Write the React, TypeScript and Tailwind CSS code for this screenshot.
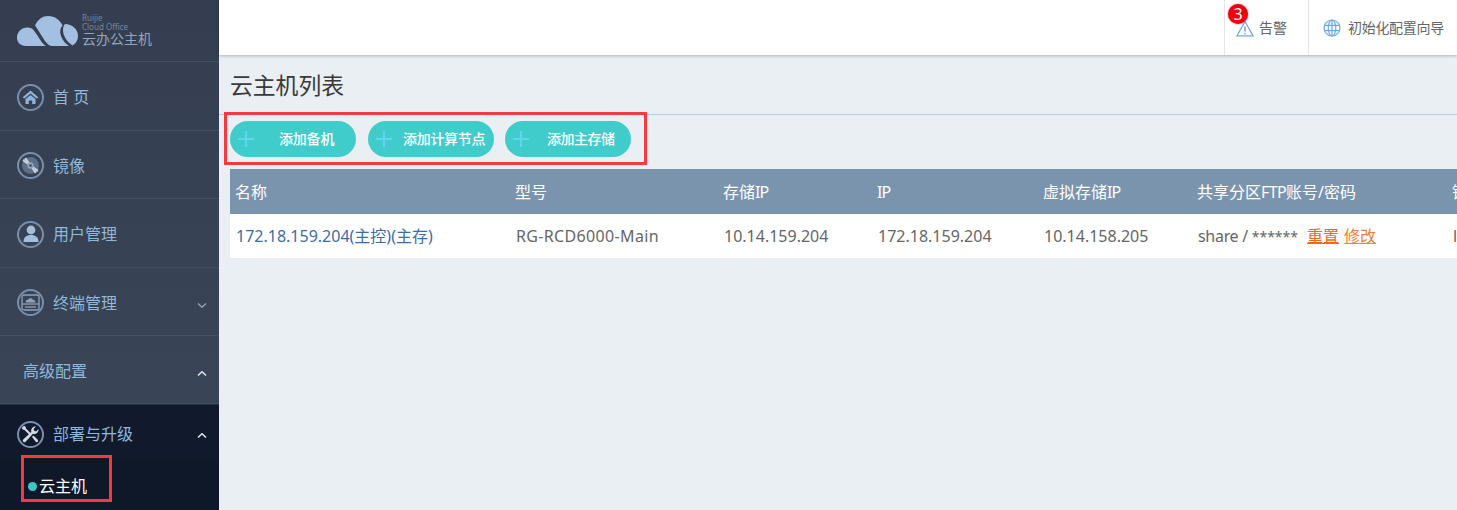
import React from "react";

function Ring({ children }: { children: React.ReactNode }) {
  return (
    <span className="flex h-[27px] w-[27px] shrink-0 items-center justify-center rounded-full border-2 border-[#7a8fa9]">
      {children}
    </span>
  );
}

const Chevron = ({ up, bright }: { up?: boolean; bright?: boolean }) => (
  <svg width="10" height="6" viewBox="0 0 10 6" className="absolute right-[12px] top-1/2 translate-y-[0.5px]" fill="none" stroke={bright ? "#e4e9ef" : "#8da0b8"} strokeWidth="1.5">
    <path d={up ? "M1 5 L5 1.2 L9 5" : "M1 1 L5 4.8 L9 1"} />
  </svg>
);

function NavItem({ icon, label, chevron, h }: { icon?: React.ReactNode; label: string; chevron?: "up" | "down"; h: string }) {
  return (
    <div className={`relative flex items-center border-b border-[#434e61] pl-[17px] pt-[2px] ${h}`}>
      {icon ? <Ring>{icon}</Ring> : null}
      <span className={`text-[16px] leading-none text-[#8fb8da] ${icon ? "ml-[9px]" : "ml-[6px]"}`}>{label}</span>
      {chevron ? <Chevron up={chevron === "up"} bright={chevron === "up"} /> : null}
    </div>
  );
}

const HomeIcon = (
  <svg width="17" height="15" viewBox="0 0 17 15" fill="#8fb3d6">
    <path d="M8.5 0.5 L16.5 7.5 L14.5 8.5 L8.5 3.5 L2.5 8.5 L0.5 7.5 Z" />
    <path d="M8.5 5 L13.5 9 V14 H10.2 V10.5 H6.8 V14 H3.5 V9 Z" />
  </svg>
);
const DiscIcon = (
  <svg width="21" height="21" viewBox="0 0 21 21">
    <circle cx="10.5" cy="10.5" r="8.5" fill="#5f6f85" />
    <path d="M3.5 4 L8.5 8.5 L7.5 9.5 L2.5 6 Z M6 2.5 L9.5 7.5 L8.5 8.5 L4 4 Z M17.5 17 L12.5 12.5 L13.5 11.5 L18.5 15 Z M15 18.5 L11.5 13.5 L12.5 12.5 L17 17 Z" fill="#c6d2df" />
    <circle cx="10.5" cy="10.5" r="3.2" fill="#8fa3ba" />
    <circle cx="10.5" cy="10.5" r="1.2" fill="#3a4558" />
  </svg>
);
const UserIcon = (
  <svg width="16" height="18" viewBox="0 0 16 18" fill="#a3bfdc">
    <circle cx="8" cy="5" r="4.4" />
    <path d="M0.5 17 C0.5 12 3.5 10 8 10 C12.5 10 15.5 12 15.5 17 Z" />
  </svg>
);
const TerminalIcon = (
  <svg width="19" height="17" viewBox="0 0 19 17" fill="none" stroke="#8fa3ba" strokeWidth="1.3">
    <rect x="1" y="1" width="17" height="15" rx="2" />
    <path d="M1 10 H18" />
    <path d="M5 8.5 C4 6.5 6 5.5 7 6 C8 3.5 11.5 4 12 6 C13.5 5.5 15 7.5 14 8.5 Z" fill="#8fa3ba" stroke="none" />
    <path d="M4 13 H15" />
  </svg>
);
const ToolIcon = (
  <svg width="19" height="19" viewBox="0 0 19 19" fill="#cfdbe8">
    <path d="M2 3.5 L3.5 2 L9.8 8.3 L8.3 9.8 Z" />
    <path d="M1.5 1.5 L4 1 L5 3 L3 5 L1 4 Z" />
    <path d="M17.5 4 A4.2 4.2 0 0 1 12 8.7 L4.6 16.8 A1.7 1.7 0 0 1 2.2 14.4 L10.3 7 A4.2 4.2 0 0 1 15 1.5 L12.6 3.9 L13.2 5.8 L15.1 6.4 Z" />
    <path d="M11 12 L12.5 10.5 L17 15 A1.5 1.5 0 0 1 15 17 Z" />
  </svg>
);
const Plus = () => (
  <svg width="16" height="16" viewBox="0 0 16 16" stroke="#62d3f0" strokeWidth="2" shapeRendering="crispEdges" className="shrink-0">
    <path d="M8 0 V16 M0 8 H16" />
  </svg>
);

function AddButton({ label, textClass, className }: { label: string; textClass: string; className?: string }) {
  return (
    <button className={`flex h-[36px] w-[126px] items-center rounded-full bg-[#41cccc] pl-[8px] ${className ?? ""}`}>
      <Plus />
      <span className={`text-[14px] font-medium leading-none text-white ${textClass}`}>{label}</span>
    </button>
  );
}

const Ip = () => <span className="tracking-[-1px]">IP</span>;

const headers: React.ReactNode[] = [
  "名称",
  "型号",
  <>存储<Ip /></>,
  <Ip />,
  <>虚拟存储<Ip /></>,
  <>共享分区<span className="tracking-[-0.6px]">FTP</span>账号/密码</>,
  "镜像版本",
];

export default function App() {
  return (
    <div className="flex h-[510px] w-[1457px] overflow-hidden bg-[#e9eff3] font-['Noto_Sans','Noto_Sans_CJK_SC',sans-serif]">
      <aside className="flex w-[219px] shrink-0 flex-col bg-gradient-to-b from-[#343e50] to-[#3b4659]">
        <div className="flex h-[62px] items-start border-b border-[#434e61] pl-[17px] pt-[16px]">
          <svg width="62" height="30" viewBox="0 0 62 30">
            <path fill="#a3c0e0" d="M9 30 C3 30 0 26 0 21.5 C0 16 5 11 11 11.5 C13.5 11.5 15 12.5 16 13.5 C21 19 24 27 29 30 Z" />
            <path fill="#a3c0e0" d="M18 9.5 C21 3 26 0 31 0 C38 0 43 4 45.5 9.5 C43 12 42.5 16 44 20 C46 25 49 28 52 30 H34 C28 28 25 19 18 9.5 Z" />
            <path fill="#a3c0e0" d="M48 8 C55 8 61 13 61 20 C61 25 58 28 55.5 29.5 C50 26 46 20 46 14 C46 11 47 9 48 8 Z" />
          </svg>
          <div className="ml-[3px] mt-[-2px] flex flex-col text-[#74849a]">
            <span className="text-[8px] leading-[8px]">Ruijie</span>
            <span className="mt-[1px] text-[8px] leading-[8px]">Cloud Office</span>
            <span className="mt-[1px] text-[14px] leading-[14px] text-[#94a6bd]">云办公主机</span>
          </div>
        </div>
        <NavItem h="h-[69px]" icon={HomeIcon} label="首 页" />
        <NavItem h="h-[68px]" icon={DiscIcon} label="镜像" />
        <NavItem h="h-[69px]" icon={UserIcon} label="用户管理" />
        <NavItem h="h-[68px]" icon={TerminalIcon} label="终端管理" chevron="down" />
        <NavItem h="h-[68px]" label="高级配置" chevron="up" />
        <div className="flex min-h-0 flex-1 flex-col border-t border-[#262f3f] bg-[#0e1829]">
          <div className="relative flex h-[54px] shrink-0 items-center bg-[#101a2c] pl-[17px] pt-[4px]">
            <Ring>{ToolIcon}</Ring>
            <span className="ml-[9px] text-[16px] leading-none text-[#8fb8da]">部署与升级</span>
            <Chevron up bright />
          </div>
          <div className="relative ml-[21px] mt-[-4px] flex h-[47px] w-[91px] items-center border-[3px] border-[#f33a3f] pl-[4px] pt-[15px]">
            <span className="h-[9px] w-[9px] rounded-full bg-[#3fc6c8]" />
            <span className="ml-[2px] text-[16px] leading-none text-white">云主机</span>
          </div>
        </div>
      </aside>

      <main className="flex min-w-0 flex-1 flex-col">
        <header className="flex h-[55px] shrink-0 justify-end bg-white shadow-[0_1px_3px_rgba(0,0,0,0.25)]">
          <div className="relative flex w-[85px] items-center border-x border-[#e4e6e8] pl-[11px]">
            <span className="absolute left-[3px] top-[4px] flex h-[20px] w-[20px] items-center justify-center rounded-full bg-[#f2000d] text-[16px] leading-none text-white shadow-[0_0_2px_rgba(120,0,0,0.6)]">3</span>
            <svg width="18" height="17" viewBox="0 0 18 17" fill="none" stroke="#6aaae6" strokeWidth="1.3" className="mt-[1px]">
              <path d="M9 1.5 L17 15.8 H1 Z" />
              <path d="M9 6.5 V11.5 M9 12.8 V14.2" stroke="#7a8a9c" />
            </svg>
            <span className="ml-[5px] text-[14px] leading-none text-[#666]">告警</span>
          </div>
          <div className="flex w-[148px] items-center pl-[14px]">
            <svg width="18" height="18" viewBox="0 0 18 18" fill="none" stroke="#6aaae6" strokeWidth="1.2">
              <circle cx="9" cy="9" r="8" />
              <ellipse cx="9" cy="9" rx="3.8" ry="8" />
              <path d="M9 1 V17 M1.3 6.3 H16.7 M1.3 11.7 H16.7" />
            </svg>
            <span className="ml-[7px] whitespace-nowrap text-[14px] leading-none tracking-[-0.3px] text-[#666]">初始化配置向导</span>
          </div>
        </header>

        <div className="flex h-[60px] shrink-0 items-center border-b border-[#b5cde2] pl-[11px] pt-[4px]">
          <h1 className="text-[22.8px] font-normal leading-none text-[#3a3a3a]">云主机列表</h1>
        </div>

        <div className="ml-[5px] mt-[-3px] flex h-[53px] w-[423px] shrink-0 items-center border-[3px] border-[#f33a3f] pl-[3px]">
          <AddButton label="添加备机" textClass="ml-[25px] tracking-[-0.2px]" />
          <AddButton label="添加计算节点" textClass="ml-[11px] tracking-[-0.3px]" className="ml-[12px]" />
          <AddButton label="添加主存储" textClass="ml-[18px] tracking-[-0.5px]" className="ml-[11px]" />
        </div>

        <div className="ml-[11px] mt-[4px] w-[1300px]">
          <table className="w-[1300px] table-fixed border-collapse text-[16px]">
            <colgroup>
              <col className="w-[280px]" />
              <col className="w-[208px]" />
              <col className="w-[154px]" />
              <col className="w-[166px]" />
              <col className="w-[154px]" />
              <col className="w-[255px]" />
              <col />
            </colgroup>
            <thead>
              <tr className="h-[45px] bg-[#7b94ae] text-left text-white">
                {headers.map((h, i) => (
                  <th key={i} className="whitespace-nowrap pl-[5px] font-normal">{h}</th>
                ))}
              </tr>
            </thead>
            <tbody>
              <tr className="h-[44px] bg-white text-[#666]">
                <td className="whitespace-nowrap pl-[6px] text-[#3a6ea5]">172.18.159.204(主控)(主存)</td>
                <td className="whitespace-nowrap pl-[6px] tracking-[0.35px]">RG-RCD6000-Main</td>
                <td className="whitespace-nowrap pl-[6px]">10.14.159.204</td>
                <td className="whitespace-nowrap pl-[6px]">172.18.159.204</td>
                <td className="whitespace-nowrap pl-[6px]">10.14.158.205</td>
                <td className="whitespace-nowrap pl-[6px]">
                  <span className="tracking-[-0.3px]">share / </span><span className="text-[14px]">******</span>
                  <a className="ml-[9px] text-[#f5661a] underline">重置</a>
                  <a className="ml-[5px] text-[#f5803a] underline">修改</a>
                </td>
                <td className="whitespace-nowrap pl-[6px]">lat</td>
              </tr>
            </tbody>
          </table>
        </div>
      </main>
    </div>
  );
}
